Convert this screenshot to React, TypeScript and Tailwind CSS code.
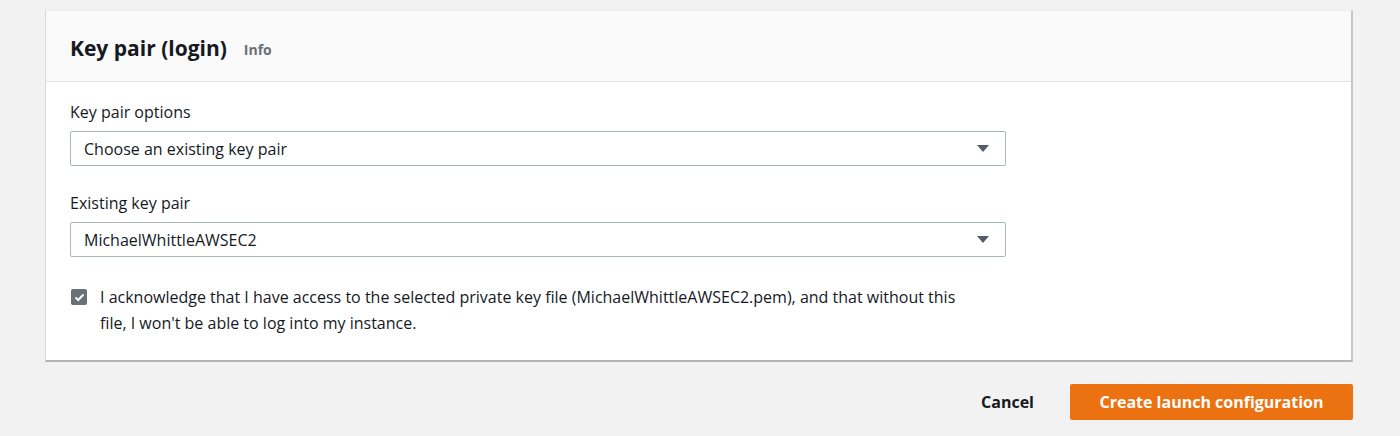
import React from 'react';

const font = { fontFamily: '"Open Sans", "Noto Sans", Arial, sans-serif' };

function Caret() {
  return (
    <svg width="12" height="8" viewBox="0 0 12 8" className="shrink-0">
      <path d="M0 0 H12 L6 7 Z" fill="#545b64" />
    </svg>
  );
}

function SelectField({ label, value }: { label: string; value: string }) {
  return (
    <div className="flex flex-col">
      <label className="text-[16px] leading-[22px] text-[#16191f] mb-[8px]">{label}</label>
      <div className="w-[936px] h-[35px] flex items-center justify-between pl-[13px] pr-[16px] border border-[#aab7b8] rounded-[2px] bg-white">
        <span className="text-[16px] text-[#16191f]">{value}</span>
        <Caret />
      </div>
    </div>
  );
}

export default function App() {
  return (
    <div className="min-h-screen w-[1400px] h-[436px] bg-[#f2f2f2] pt-[10px]" style={font}>
      <div className="ml-[45px] w-[1308px] bg-white border-t border-t-[#eaeded] border-l border-[#d5dbdb] border-r-2 border-r-[#c6c6c6] border-b-2 border-b-[#b4b4b4]">
        <div className="h-[71px] bg-[#fafafa] border-b border-[#e3e3e3] flex items-center pl-[24px]">
          <h2 className="text-[21px] font-bold text-[#16191f] leading-none mt-[4px]">Key pair (login)</h2>
          <span className="ml-[17px] text-[14px] font-bold text-[#687078] mt-[7px]">Info</span>
        </div>
        <div className="pl-[24px] pt-[19px] pb-[24px] flex flex-col gap-[26px]">
          <SelectField label="Key pair options" value="Choose an existing key pair" />
          <SelectField label="Existing key pair" value="MichaelWhittleAWSEC2" />
          <div className="flex items-start mt-[2px]">
            <div className="w-[16px] h-[16px] mt-[4px] ml-[1px] rounded-[2px] bg-[#687078] flex items-center justify-center shrink-0">
              <svg width="11" height="9" viewBox="0 0 11 9">
                <path d="M1.5 4.5 L4.2 7 L9.5 1.5" fill="none" stroke="white" strokeWidth="2" />
              </svg>
            </div>
            <p className="ml-[13px] text-[16px] leading-[26px] text-[#16191f] w-[870px] -mt-[1px]">
              I acknowledge that I have access to the selected private key file (MichaelWhittleAWSEC2.pem), and that without this file, I won't be able to log into my instance.
            </p>
          </div>
        </div>
      </div>
      <div className="flex justify-end items-center w-[1353px] mt-[22px] gap-[36px]">
        <button className="text-[16px] font-bold text-[#16191f]">Cancel</button>
        <button className="w-[283px] h-[36px] bg-[#ec7211] rounded-[2px] text-white text-[16px] font-bold">
          Create launch configuration
        </button>
      </div>
    </div>
  );
}
